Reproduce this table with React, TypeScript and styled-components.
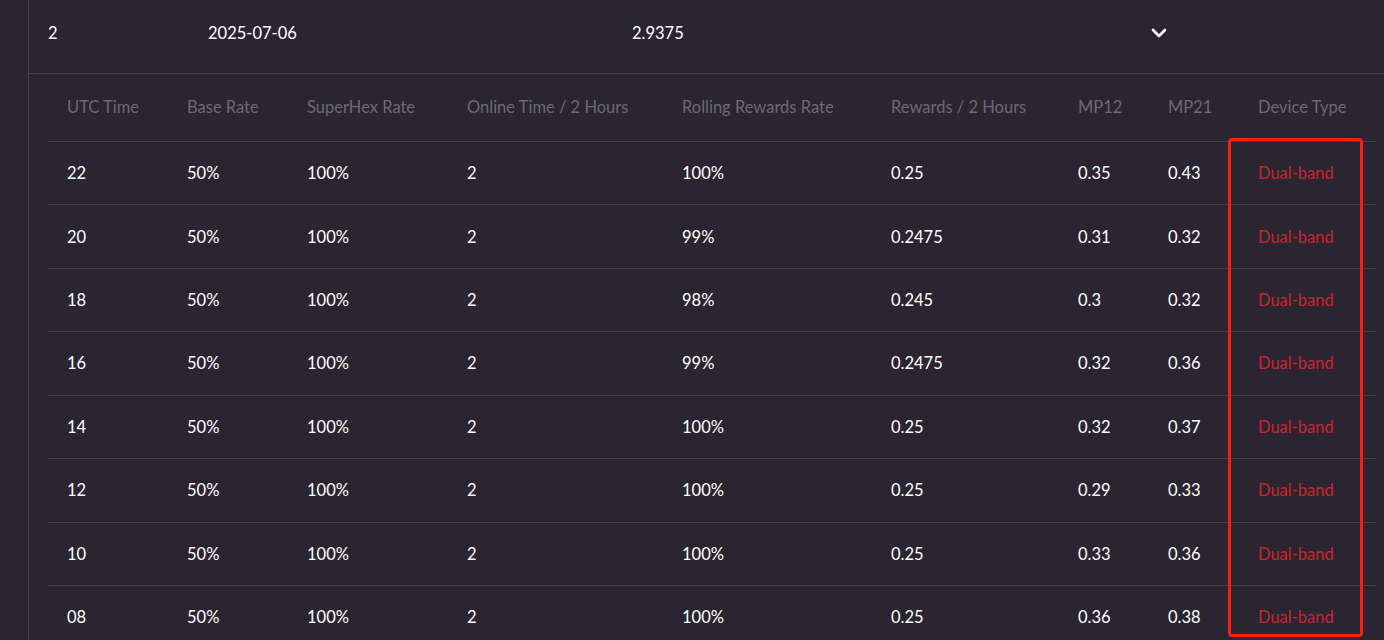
import React from "react";
import styled, { createGlobalStyle } from "styled-components";
import { ChevronDown } from "lucide-react";

const GlobalStyle = createGlobalStyle`
  html, body { margin: 0; padding: 0; background: #2a2530; }
  body { font-family: Lato, "Open Sans", Arial, sans-serif; font-size: 16.5px; color: #ffffff; overflow: hidden; }
`;

const Page = styled.div`
  display: flex;
  width: 1384px;
  height: 640px;
  background: #2a2530;
  overflow: hidden;
`;

const Gutter = styled.div`
  width: 28px;
  flex: none;
  border-right: 1px solid #433e48;
`;

const Main = styled.div`
  flex: 1;
  display: flex;
  flex-direction: column;
  min-width: 0;
`;

const SummaryRow = styled.div`
  flex: none;
  display: grid;
  grid-template-columns: 160px 424px 515px 40px 1fr;
  align-items: center;
  height: 65px;
  padding: 0 0 8px 19px;
  border-bottom: 1px solid #433e48;
`;

const SummaryCell = styled.div`
  color: #ffffff;
  line-height: 20px;
`;

const ChevronWrap = styled.div`
  display: flex;
  align-items: center;
  color: #ffffff;
  margin-top: 1px;
`;

const Detail = styled.div`
  flex: none;
  position: relative;
  margin: 0 8px 0 19px;
`;

const cols = "120px 120px 160px 215px 209px 187px 90px 90px 1fr";

const HeadRow = styled.div`
  display: grid;
  grid-template-columns: ${cols};
  align-items: center;
  height: 65px;
  padding-bottom: 2px;
  border-bottom: 1px solid #433e48;
`;

const Row = styled.div`
  display: grid;
  grid-template-columns: ${cols};
  align-items: center;
  height: 62.43px;
  border-bottom: 1px solid #433e48;
`;

const HeadCell = styled.div`
  padding-left: 19px;
  color: #6d6a73;
  white-space: nowrap;
  line-height: 20px;
`;

const Cell = styled.div<{ $accent?: boolean }>`
  padding-left: 19px;
  color: ${(p) => (p.$accent ? "#c9252f" : "#ffffff")};
  white-space: nowrap;
  line-height: 20px;
`;

const Highlight = styled.div`
  position: absolute;
  left: 1180px;
  top: 64px;
  width: 129px;
  height: 493px;
  border: 3.5px solid #fc1c12;
  border-radius: 4px;
  pointer-events: none;
`;

const headers = [
  "UTC Time",
  "Base Rate",
  "SuperHex Rate",
  "Online Time / 2 Hours",
  "Rolling Rewards Rate",
  "Rewards / 2 Hours",
  "MP12",
  "MP21",
  "Device Type",
];

const rows: string[][] = [
  ["22", "50%", "100%", "2", "100%", "0.25", "0.35", "0.43"],
  ["20", "50%", "100%", "2", "99%", "0.2475", "0.31", "0.32"],
  ["18", "50%", "100%", "2", "98%", "0.245", "0.3", "0.32"],
  ["16", "50%", "100%", "2", "99%", "0.2475", "0.32", "0.36"],
  ["14", "50%", "100%", "2", "100%", "0.25", "0.32", "0.37"],
  ["12", "50%", "100%", "2", "100%", "0.25", "0.29", "0.33"],
  ["10", "50%", "100%", "2", "100%", "0.25", "0.33", "0.36"],
  ["08", "50%", "100%", "2", "100%", "0.25", "0.36", "0.38"],
];

export default function App() {
  return (
    <>
      <GlobalStyle />
      <Page>
        <Gutter />
        <Main>
          <SummaryRow>
            <SummaryCell>2</SummaryCell>
            <SummaryCell>2025-07-06</SummaryCell>
            <SummaryCell>2.9375</SummaryCell>
            <ChevronWrap>
              <ChevronDown size={24} strokeWidth={2.6} />
            </ChevronWrap>
            <div />
          </SummaryRow>
          <Detail>
            <HeadRow>
              {headers.map((h) => (
                <HeadCell key={h}>{h}</HeadCell>
              ))}
            </HeadRow>
            {rows.map((r, i) => (
              <Row key={i}>
                {r.map((v, j) => (
                  <Cell key={j}>{v}</Cell>
                ))}
                <Cell $accent>Dual-band</Cell>
              </Row>
            ))}
            <Highlight />
          </Detail>
        </Main>
      </Page>
    </>
  );
}
